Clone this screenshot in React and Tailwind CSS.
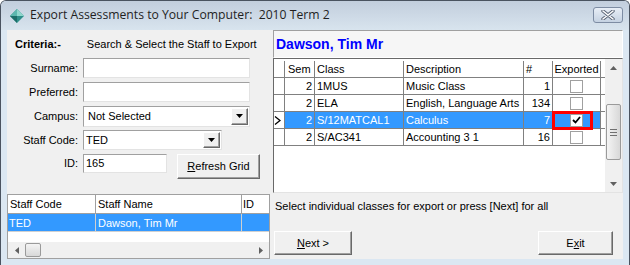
import React from 'react'

const sunken = 'border border-t-[#a0a0a0] border-l-[#a0a0a0] border-b-[#e3e3e3] border-r-[#e3e3e3] bg-white'
const raised = 'border border-t-white border-l-white border-b-[#696969] border-r-[#696969] bg-[#f0f0f0] shadow-[inset_-1px_-1px_0_#a0a0a0]'

function TitleIcon() {
  return (
    <svg width="14" height="14" viewBox="0 0 14 14">
      <path d="M7 0 L14 7 L7 14 L0 7 Z" fill="#2f8f8a" />
      <path d="M7 0 L14 7 L7 7 Z" fill="#8fd6cc" />
      <path d="M7 0 L0 7 L7 7 Z" fill="#5cb7ae" />
      <path d="M0 7 L7 14 L7 7 Z" fill="#1c6e69" />
    </svg>
  )
}

function CloseButton() {
  return (
    <div className="w-[30px] h-[16px] rounded-[3px] border border-[#7d8ca3] bg-gradient-to-b from-[#e8eef6] to-[#c5d2e2] flex items-center justify-center">
      <svg width="14" height="10" viewBox="0 0 14 10">
        <path d="M2 1 L12 9 M12 1 L2 9" stroke="#5b6678" strokeWidth="3.4" strokeLinecap="round" />
        <path d="M2 1 L12 9 M12 1 L2 9" stroke="#ffffff" strokeWidth="1.6" strokeLinecap="round" />
      </svg>
    </div>
  )
}

function DropArrow() {
  return (
    <div className={`w-[17px] h-full ${raised} flex items-center justify-center`}>
      <svg width="7" height="4" viewBox="0 0 7 4">
        <path d="M0 0 L7 0 L3.5 4 Z" fill="#000" />
      </svg>
    </div>
  )
}

function Field({ label, children }) {
  return (
    <div className="flex items-center h-[20px]">
      <div className="w-[76px] text-right pr-[5px]">{label}</div>
      {children}
    </div>
  )
}

function Check({ checked }) {
  return (
    <div className="w-[13px] h-[13px] border border-[#a0a0a0] bg-white flex items-center justify-center">
      {checked && (
        <svg width="9" height="8" viewBox="0 0 9 8">
          <path d="M1 4 L3.5 6.5 L8 1" stroke="#000" strokeWidth="1.8" fill="none" />
        </svg>
      )}
    </div>
  )
}

const classes = [
  { sem: 2, cls: '1MUS', desc: 'Music Class', n: 1, exp: false },
  { sem: 2, cls: 'ELA', desc: 'English, Language Arts', n: 134, exp: false },
  { sem: 2, cls: 'S/12MATCAL1', desc: 'Calculus', n: 7, exp: true, sel: true },
  { sem: 2, cls: 'S/AC341', desc: 'Accounting 3 1', n: 16, exp: false },
]

export default function App() {
  return (
    <div className="w-[630px] h-[265px] bg-[#dbe7f2] flex flex-col overflow-hidden rounded-t-[6px] border-t border-l border-r border-[#4a5360] font-['Liberation_Sans',sans-serif] text-[11px] text-black">
      {/* title bar */}
      <div className="h-[29px] flex items-center pl-[9px] pr-[6px] bg-gradient-to-b from-[#c2cedd] to-[#d8e4ee]">
        <TitleIcon />
        <span className="ml-[6px] text-[12.2px] text-[#1f1f1f] font-['Open_Sans',sans-serif]">
          Export Assessments to Your Computer:&nbsp; 2010 Term 2
        </span>
        <div className="ml-auto mb-[1px]">
          <CloseButton />
        </div>
      </div>

      {/* client */}
      <div className="flex-1 flex px-[6px] pb-[6px]">
        <div className="flex-1 bg-[#f0f0f0] flex">
          {/* left panel */}
          <div className="w-[263px] flex flex-col">
            <div className="flex items-center h-[28px]">
              <span className="ml-[8px] font-bold">Criteria:-</span>
              <span className="ml-[26px]">Search &amp; Select the Staff to Export</span>
            </div>
            <div className="flex flex-col gap-[4px]">
              <Field label="Surname:">
                <div className={`w-[167px] h-full ${sunken}`} />
              </Field>
              <Field label="Preferred:">
                <div className={`w-[167px] h-full ${sunken}`} />
              </Field>
              <Field label="Campus:">
                <div className={`w-[167px] h-[21px] ${sunken} flex items-stretch p-[1px]`}>
                  <span className="flex-1 pl-[3px] leading-[17px]">Not Selected</span>
                  <DropArrow />
                </div>
              </Field>
              <Field label="Staff Code:">
                <div className={`w-[139px] h-full ${sunken} flex items-stretch p-[1px]`}>
                  <span className="flex-1 pl-[1px] leading-[16px]">TED</span>
                  <DropArrow />
                </div>
              </Field>
              <div className="flex items-start h-[26px]">
                <div className="w-[76px] text-right pr-[5px] leading-[19px]">ID:</div>
                <div className={`w-[84px] h-[19px] ${sunken} pl-[2px] leading-[17px]`}>165</div>
                <div className={`ml-[10px] w-[83px] h-[25px] ${raised} flex items-center justify-center`}>
                  <span><u>R</u>efresh Grid</span>
                </div>
              </div>
            </div>

            {/* staff grid */}
            <div className="mt-[14px] flex-1 border border-[#a0a0a0] bg-white flex flex-col">
              <div className="flex h-[19px] border-b border-[#a0a0a0]">
                <div className="w-[88px] border-r border-[#a0a0a0] pl-[2px] leading-[18px]">Staff Code</div>
                <div className="w-[146px] border-r border-[#a0a0a0] pl-[2px] leading-[18px]">Staff Name</div>
                <div className="flex-1 pl-[1px] leading-[18px]">ID</div>
              </div>
              <div className="flex h-[18px] bg-[#3399ff] text-white border-b border-[#d0d0d0]">
                <div className="w-[88px] border-r border-[#d0d0d0] pl-[1px] leading-[18px]">TED</div>
                <div className="w-[146px] border-r border-[#d0d0d0] pl-[2px] leading-[18px]">Dawson, Tim Mr</div>
                <div className="flex-1" />
              </div>
              <div className="flex-1" />
              <div className="h-[16px] bg-[#f0f0f0] flex items-center">
                <div className="w-[17px] flex items-center justify-center">
                  <svg width="4" height="7" viewBox="0 0 4 7"><path d="M4 0 L0 3.5 L4 7 Z" fill="#606060" /></svg>
                </div>
                <div className="w-[16px] h-[14px] rounded-[2px] border border-[#9a9a9a] bg-gradient-to-b from-[#f4f4f4] to-[#d8d8d8]" />
                <div className="flex-1" />
                <div className="w-[17px] flex items-center justify-center">
                  <svg width="4" height="7" viewBox="0 0 4 7"><path d="M0 0 L4 3.5 L0 7 Z" fill="#606060" /></svg>
                </div>
              </div>
            </div>
          </div>

          {/* right panel */}
          <div className="flex-1 ml-[3px] flex flex-col">
            <div className="h-[28px] border border-[#a0a0a0] border-r-white border-b-white bg-[#f6f6f6] flex items-center pl-[2px]">
              <span className="text-[14px] font-bold text-[#0000ff]">Dawson, Tim Mr</span>
            </div>

            {/* classes grid */}
            <div className="h-[135px] border border-[#696969] border-r-[#e3e3e3] border-b-[#e3e3e3] bg-white flex">
              <div className="flex-1 flex flex-col pt-[2px]">
                <div className="flex h-[17px] border-b border-[#808080]">
                  <div className="w-[11px] border-r border-[#808080]" />
                  <div className="w-[30px] border-r border-[#808080] pl-[3px] leading-[16px]">Sem</div>
                  <div className="w-[89px] border-r border-[#808080] pl-[2px] leading-[16px]">Class</div>
                  <div className="w-[120px] border-r border-[#808080] pl-[2px] leading-[16px]">Description</div>
                  <div className="w-[29px] border-r border-[#808080] pl-[2px] leading-[16px]">#</div>
                  <div className="w-[48px] border-r border-[#808080] text-center leading-[16px]">Exported</div>
                </div>
                {classes.map((r) => (
                  <div key={r.cls} className="flex h-[17px] border-b border-[#808080]">
                    <div className="w-[11px] border-r border-[#808080] flex items-center">
                      {r.sel && (
                        <svg width="7" height="9" viewBox="0 0 7 9"><path d="M1 0.5 L6 4.5 L1 8.5" stroke="#000" strokeWidth="1.3" fill="none" /></svg>
                      )}
                    </div>
                    <div className={`flex ${r.sel ? 'bg-[#3399ff] text-white' : ''}`}>
                      <div className="w-[30px] border-r border-[#808080] pr-[2px] text-right leading-[16px]">{r.sem}</div>
                      <div className="w-[89px] border-r border-[#808080] pl-[2px] leading-[16px]">{r.cls}</div>
                      <div className="w-[120px] border-r border-[#808080] pl-[2px] leading-[16px] whitespace-nowrap overflow-hidden">{r.desc}</div>
                      <div className="w-[29px] border-r border-[#808080] pr-[2px] text-right leading-[16px]">{r.n}</div>
                      <div className="w-[48px] border-r border-[#808080] flex items-center justify-center relative">
                        <Check checked={r.exp} />
                        {r.sel && <div className="absolute -left-[1px] -top-[1px] w-[41px] h-[19px] border-[3px] border-[#ff0000]" />}
                      </div>
                    </div>
                  </div>
                ))}
              </div>
              {/* vertical scrollbar */}
              <div className="w-[17px] bg-[#f0f0f0] flex flex-col items-center">
                <div className="h-[17px] flex items-center justify-center">
                  <svg width="7" height="4" viewBox="0 0 7 4"><path d="M0 4 L3.5 0 L7 4 Z" fill="#606060" /></svg>
                </div>
                <div className="h-[28px]" />
                <div className="w-[15px] h-[56px] rounded-[2px] border border-[#9a9a9a] bg-gradient-to-r from-[#f4f4f4] to-[#d8d8d8] flex flex-col items-center justify-center gap-[2px]">
                  <div className="w-[7px] h-px bg-[#707070]" />
                  <div className="w-[7px] h-px bg-[#707070]" />
                  <div className="w-[7px] h-px bg-[#707070]" />
                </div>
                <div className="flex-1" />
                <div className="h-[17px] flex items-center justify-center">
                  <svg width="7" height="4" viewBox="0 0 7 4"><path d="M0 0 L7 0 L3.5 4 Z" fill="#606060" /></svg>
                </div>
              </div>
            </div>

            <div className="pl-[2px] mt-[5px] h-[16px] leading-[16px]">
              Select individual classes for export or press [Next] for all
            </div>
            <div className="flex mt-[17px] px-[1px] pr-[10px]">
              <div className={`w-[78px] h-[24px] ${raised} flex items-center justify-center`}>
                <span><u>N</u>ext &gt;</span>
              </div>
              <div className={`ml-auto w-[75px] h-[24px] ${raised} flex items-center justify-center`}>
                <span>E<u>x</u>it</span>
              </div>
            </div>
          </div>
        </div>
      </div>
    </div>
  )
}
